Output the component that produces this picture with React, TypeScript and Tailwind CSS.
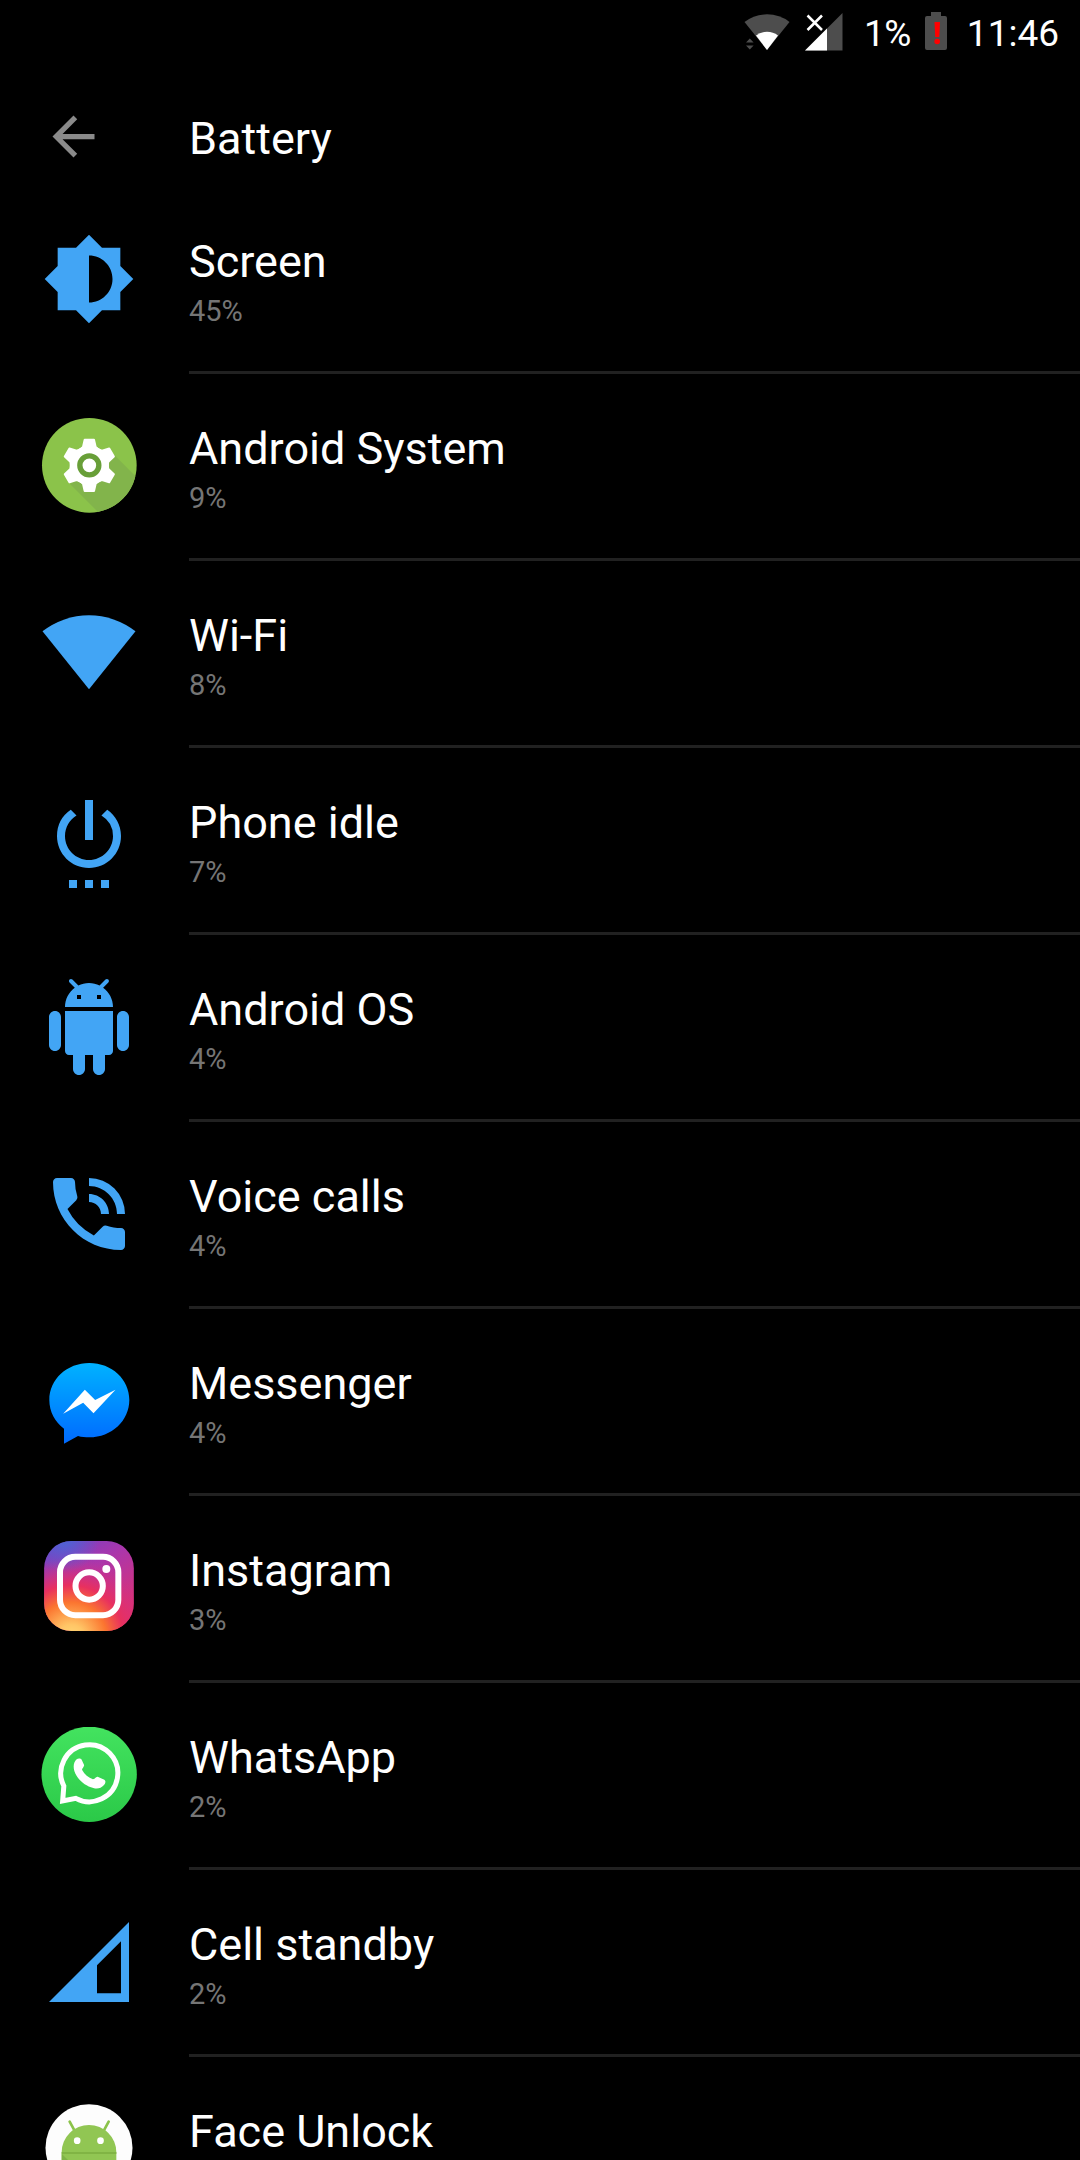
import React from 'react';
import { MdArrowBack, MdBrightnessMedium, MdPhoneInTalk, MdSettingsPower } from 'react-icons/md';

function AndroidSystemIcon() {
  return (
    <svg viewBox="0 0 288 288" className="size-24">
      <defs>
        <clipPath id="system-clip">
          <circle cx="145" cy="142" r="142" />
        </clipPath>
      </defs>
      <circle cx="145" cy="142" r="142" fill="#8bc34a" />
      <path d="M220 111 L330 221 L250 330 L215 326 L87 198Z" fill="#82b44b" clipPath="url(#system-clip)" />
      <g transform="translate(145 142)" fill="#fff" stroke="#fff" strokeWidth="6" strokeLinejoin="round">
        <circle r="56" />
        {[0, 60, 120, 180, 240, 300].map((angle) => (
          <path key={angle} d="M-14 -77 L14 -77 L19 -55 L30 -45 L-30 -45 L-19 -55Z" transform={`rotate(${angle})`} />
        ))}
      </g>
      <circle cx="145" cy="142" r="28.5" fill="#fff" stroke="#689f38" strokeWidth="16" />
    </svg>
  );
}

function WifiIcon() {
  return (
    <svg viewBox="0 0 288 288" className="size-24">
      <path d="M4.5 79 A227 227 0 0 1 283.5 79 L144 253Z" fill="#42a5f5" />
    </svg>
  );
}

function AndroidIcon() {
  return (
    <svg viewBox="0 0 24 24" className="size-24">
      <path
        d="M6 18c0 .55.45 1 1 1h1v3.500c0 .83.67 1.500 1.500 1.500s1.500-.67 1.500-1.500V19h2v3.500c0 .83.67 1.500 1.500 1.500s1.500-.67 1.500-1.500V19h1c.55 0 1-.45 1-1V8H6v10zM3.500 8C2.670 8 2 8.670 2 9.500v7c0 .83.67 1.500 1.500 1.500S5 17.330 5 16.500v-7C5 8.670 4.330 8 3.500 8zm17 0c-.83 0-1.500.67-1.500 1.500v7c0 .83.67 1.500 1.500 1.500s1.500-.67 1.500-1.500v-7c0-.83-.67-1.500-1.500-1.500zm-4.970-5.840l1.300-1.300c.2-.2.2-.51 0-.71-.2-.2-.51-.2-.71 0l-1.480 1.480C13.850 1.230 12.950 1 12 1c-.96 0-1.860.23-2.660.63L7.850.15c-.2-.2-.51-.2-.71 0-.2.2-.2.51 0 .71l1.310 1.310C6.970 3.260 6 5.010 6 7h12c0-1.990-.97-3.750-2.470-4.840zM10 5H9V4h1v1zm5 0h-1V4h1v1z"
        fill="#42a5f5"
      />
    </svg>
  );
}

function MessengerIcon() {
  return (
    <svg viewBox="0 0 288 288" className="size-24">
      <defs>
        <linearGradient id="messenger" x1="0" y1="30" x2="0" y2="272" gradientUnits="userSpaceOnUse">
          <stop offset="0" stopColor="#00b2ff" />
          <stop offset="1" stopColor="#006aff" />
        </linearGradient>
      </defs>
      <path
        d="M145 30 C78 30 25 79 25 141 C25 176 42 207 69 227 V272 L111 249 C122 252 133 253 145 253 C212 253 265 203 265 141 C265 79 212 30 145 30Z"
        fill="url(#messenger)"
      />
      <path d="M66.5 182 L131.5 110 L162.5 141 L223.5 110 L157.5 181 L126.5 149Z" fill="#fff" />
    </svg>
  );
}

function InstagramIcon() {
  return (
    <svg viewBox="0 0 288 288" className="size-24">
      <defs>
        <linearGradient id="ig-base" x1="0.3" y1="0" x2="0.8" y2="0.9">
          <stop offset="0" stopColor="#7d3fc0" />
          <stop offset="0.35" stopColor="#ab36ab" />
          <stop offset="1" stopColor="#e0306f" />
        </linearGradient>
        <radialGradient id="ig-blue" cx="0.22" cy="-0.05" r="0.4">
          <stop offset="0" stopColor="#4868d8" />
          <stop offset="1" stopColor="#4868d8" stopOpacity="0" />
        </radialGradient>
        <radialGradient id="ig-warm" cx="0.3" cy="1.08" r="0.95">
          <stop offset="0" stopColor="#ffdb78" />
          <stop offset="0.16" stopColor="#ffc566" />
          <stop offset="0.42" stopColor="#fb7530" />
          <stop offset="0.62" stopColor="#e8305f" />
          <stop offset="0.95" stopColor="#d0308a" stopOpacity="0" />
        </radialGradient>
      </defs>
      <rect x="9.5" y="3" width="269" height="270" rx="82" fill="url(#ig-base)" />
      <rect x="9.5" y="3" width="269" height="270" rx="82" fill="url(#ig-warm)" />
      <rect x="9.5" y="3" width="269" height="270" rx="82" fill="url(#ig-blue)" />
      <rect x="57" y="50.5" width="175" height="175" rx="46" fill="none" stroke="#fff" strokeWidth="18" />
      <circle cx="144.5" cy="138" r="41" fill="none" stroke="#fff" strokeWidth="18" />
      <circle cx="196" cy="87" r="12" fill="#fff" />
    </svg>
  );
}

function WhatsAppIcon() {
  return (
    <svg viewBox="0 0 288 288" className="size-24">
      <defs>
        <linearGradient id="whatsapp" x1="0" y1="0" x2="0" y2="1">
          <stop offset="0" stopColor="#43e35f" />
          <stop offset="1" stopColor="#2bc948" />
        </linearGradient>
      </defs>
      <circle cx="144.5" cy="142" r="143" fill="url(#whatsapp)" />
      <path d="M68.5 177 A85.5 85.5 0 1 1 104.5 214 L65 222Z" fill="none" stroke="#fff" strokeWidth="15" />
      <path
        d="M107 97 C111 94 119 94 122 98 L129 113 C131 118 124 123 123 128 C130 142 143 152 156 157 C161 156 165 148 170 149 L190 158 C195 161 194 169 189 174 C180 184 169 187 157 183 C129 176 108 155 100 132 C96 118 98 105 107 97Z"
        fill="#fff"
      />
    </svg>
  );
}

function CellIcon() {
  return (
    <svg viewBox="0 0 24 24" className="size-24">
      <path d="M2 22 L22 2 V22Z M14 12.8 V19.8 H20 V6.8Z" fill="#42a5f5" fillRule="evenodd" />
    </svg>
  );
}

function FaceUnlockIcon() {
  return (
    <svg viewBox="0 0 288 288" className="size-24">
      <circle cx="144" cy="140" r="130.5" fill="#fdfdfd" />
      <path d="M86 62 L99 86 M203 62 L190 86" stroke="#8bc34a" strokeWidth="8" strokeLinecap="round" />
      <path d="M62 154 A82 82 0 0 1 226 154 V230 H62Z" fill="#91c653" />
      <path d="M62 158 L134 230 H62Z" fill="#7fb347" />
      <path d="M62 153 H226 V159 H62Z" fill="#80b444" />
      <circle cx="108.5" cy="119" r="10" fill="#fff" />
      <circle cx="178.5" cy="119" r="10" fill="#fff" />
    </svg>
  );
}

const blueIcon = 'size-24 text-[#42a5f5]';

const items = [
  { name: 'Screen', usage: '45%', icon: <MdBrightnessMedium className="m-px size-[94px] text-[#42a5f5]" /> },
  { name: 'Android System', usage: '9%', icon: <AndroidSystemIcon /> },
  { name: 'Wi-Fi', usage: '8%', icon: <WifiIcon /> },
  { name: 'Phone idle', usage: '7%', icon: <MdSettingsPower className={blueIcon} /> },
  { name: 'Android OS', usage: '4%', icon: <AndroidIcon /> },
  { name: 'Voice calls', usage: '4%', icon: <MdPhoneInTalk className={blueIcon} /> },
  { name: 'Messenger', usage: '4%', icon: <MessengerIcon /> },
  { name: 'Instagram', usage: '3%', icon: <InstagramIcon /> },
  { name: 'WhatsApp', usage: '2%', icon: <WhatsAppIcon /> },
  { name: 'Cell standby', usage: '2%', icon: <CellIcon /> },
  { name: 'Face Unlock', icon: <FaceUnlockIcon /> },
];

function StatusBar() {
  return (
    <div className="flex h-[66px] shrink-0 items-start justify-end pr-[21px] text-white">
      <svg viewBox="0 0 46 40" className="mt-3 h-10 w-[46px]">
        <path d="M0.5 10 A37 37 0 0 1 45.5 10 L23 38Z" fill="#4d4d4d" />
        <path d="M12 23.5 A18 18 0 0 1 34 23.5 L23 38Z" fill="#fff" />
        <path d="M2 30.5 L5.8 26.5 L9.6 30.5Z M2 33.5 H9.6 L5.8 37.5Z" fill="#4d4d4d" />
      </svg>
      <svg viewBox="0 0 40 40" className="mt-3 ml-[14px] size-10">
        <path d="M1 38.5 L38.5 1 V38.5Z" fill="#4d4d4d" />
        <path d="M1 38.5 L23 16.5 V38.5Z" fill="#fff" />
        <path d="M3.5 3.5 L18 18 M18 3.5 L3.5 18" stroke="#000" strokeWidth="6" />
        <path d="M3.5 3.5 L18 18 M18 3.5 L3.5 18" stroke="#fff" strokeWidth="2.5" />
      </svg>
      <span className="mt-[13px] ml-5 text-[37px] leading-[42px] tracking-[-0.5px]">1%</span>
      <svg viewBox="0 0 22 38" className="mt-3 ml-[14px] h-[38px] w-[22px]">
        <path d="M6 0 H16 V4 H20 Q22 4 22 6 V36 Q22 38 20 38 H2 Q0 38 0 36 V6 Q0 4 2 4 H6Z" fill="#4d4d4d" />
        <path d="M9.5 10 H15 L14.3 25 H10.2Z" fill="#f00" />
        <circle cx="12.2" cy="29.5" r="2.8" fill="#f00" />
      </svg>
      <span className="mt-[13px] ml-5 text-[37px] leading-[42px]">11:46</span>
    </div>
  );
}

export default function App() {
  return (
    <div className="flex h-[2160px] w-[1080px] flex-col overflow-hidden bg-black font-['Roboto',sans-serif]">
      <StatusBar />
      <header className="flex h-[121px] shrink-0 items-start">
        <div className="w-[189px] pt-[39px] pl-[42px]">
          <MdArrowBack className="size-[63px] text-[#8a8a8a]" />
        </div>
        <h1 className="pt-[46px] text-[45px] leading-[54px] text-white">Battery</h1>
      </header>
      <ul>
        {items.map((item) => (
          <li key={item.name} className="flex h-[187px]">
            <div className="w-[189px] shrink-0 pt-11 pl-[41px]">{item.icon}</div>
            <div className="flex flex-1 flex-col gap-1 border-b-3 border-[#212121] pt-12">
              <span className="text-[45px] leading-[54px] text-white">{item.name}</span>
              {item.usage && <span className="text-[29px] leading-9 text-[#757575]">{item.usage}</span>}
            </div>
          </li>
        ))}
      </ul>
    </div>
  );
}
